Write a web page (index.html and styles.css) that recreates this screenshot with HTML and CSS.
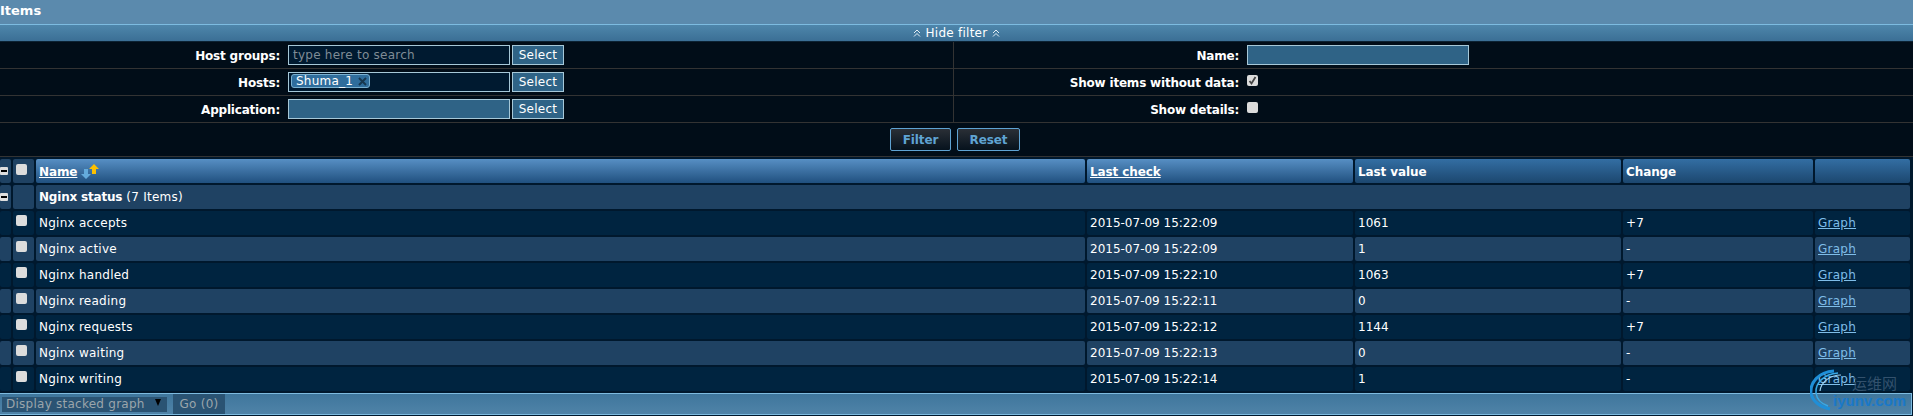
FILE: index.html
```html
<!DOCTYPE html>
<html lang="en">
<head>
  <meta charset="UTF-8" />
  <title>Items</title>
  <link rel="stylesheet" href="styles.css">
</head>
<body>
  <div class="title-bar">Items</div>

  <div class="filter-toggle">
    <svg class="chevrons" width="8" height="8" viewBox="0 0 8 8"><path d="M1 4 L4 1 L7 4 M1 7.5 L4 4.5 L7 7.5"/></svg>
    <span>Hide filter</span>
    <svg class="chevrons" width="8" height="8" viewBox="0 0 8 8"><path d="M1 4 L4 1 L7 4 M1 7.5 L4 4.5 L7 7.5"/></svg>
  </div>

  <div class="filter">
    <div class="filter-row">
      <div class="filter-half left">
        <label>Host groups:</label>
        <div class="field">
          <div class="input dark placeholder">type here to search</div>
          <button class="btn-select">Select</button>
        </div>
      </div>
      <div class="filter-half right">
        <label>Name:</label>
        <div class="field"><div class="input"></div></div>
      </div>
    </div>
    <div class="filter-row">
      <div class="filter-half left">
        <label>Hosts:</label>
        <div class="field">
          <div class="input dark">
            <span class="chip">Shuma_1<svg width="9" height="9" viewBox="0 0 9 9"><path d="M1 1 L8 8 M8 1 L1 8"/></svg></span>
          </div>
          <button class="btn-select">Select</button>
        </div>
      </div>
      <div class="filter-half right">
        <label>Show items without data:</label>
        <div class="field"><span class="check on"><svg width="11" height="11" viewBox="0 0 11 11"><path d="M2.5 6 L4.5 8.5 L8.5 2"/></svg></span></div>
      </div>
    </div>
    <div class="filter-row">
      <div class="filter-half left">
        <label>Application:</label>
        <div class="field">
          <div class="input"></div>
          <button class="btn-select">Select</button>
        </div>
      </div>
      <div class="filter-half right">
        <label>Show details:</label>
        <div class="field"><span class="check"></span></div>
      </div>
    </div>
    <div class="filter-actions">
      <button class="btn-action">Filter</button>
      <button class="btn-action">Reset</button>
    </div>
  </div>

  <table class="items">
    <colgroup>
      <col class="c-toggle"><col class="c-check"><col class="c-name"><col class="c-check-time"><col class="c-value"><col class="c-change"><col class="c-graph">
    </colgroup>
    <thead>
      <tr>
        <th class="toggle"><span class="minus"></span></th>
        <th class="cell-check"><span class="check"></span></th>
        <th class="sorted">
          <a href="#">Name</a>
          <svg class="sort" width="19" height="15" viewBox="0 0 19 15">
            <path class="down" d="M3 5 H7 V10 H10 L5 15 L0 10 H3 Z"/>
            <path class="up" d="M11 5 H15 V10 H11 Z M13 0 L18 5 H8 Z"/>
          </svg>
        </th>
        <th class="sorted"><a href="#">Last check</a></th>
        <th>Last value</th>
        <th>Change</th>
        <th></th>
      </tr>
    </thead>
    <tbody>
      <tr class="group">
        <td class="toggle"><span class="minus"></span></td>
        <td></td>
        <td colspan="5"><b>Nginx status</b> (7 Items)</td>
      </tr>
      <tr>
        <td></td><td class="cell-check"><span class="check"></span></td>
        <td>Nginx accepts</td><td>2015-07-09 15:22:09</td><td>1061</td><td>+7</td><td><a href="#">Graph</a></td>
      </tr>
      <tr class="alt">
        <td></td><td class="cell-check"><span class="check"></span></td>
        <td>Nginx active</td><td>2015-07-09 15:22:09</td><td>1</td><td>-</td><td><a href="#">Graph</a></td>
      </tr>
      <tr>
        <td></td><td class="cell-check"><span class="check"></span></td>
        <td>Nginx handled</td><td>2015-07-09 15:22:10</td><td>1063</td><td>+7</td><td><a href="#">Graph</a></td>
      </tr>
      <tr class="alt">
        <td></td><td class="cell-check"><span class="check"></span></td>
        <td>Nginx reading</td><td>2015-07-09 15:22:11</td><td>0</td><td>-</td><td><a href="#">Graph</a></td>
      </tr>
      <tr>
        <td></td><td class="cell-check"><span class="check"></span></td>
        <td>Nginx requests</td><td>2015-07-09 15:22:12</td><td>1144</td><td>+7</td><td><a href="#">Graph</a></td>
      </tr>
      <tr class="alt">
        <td></td><td class="cell-check"><span class="check"></span></td>
        <td>Nginx waiting</td><td>2015-07-09 15:22:13</td><td>0</td><td>-</td><td><a href="#">Graph</a></td>
      </tr>
      <tr>
        <td></td><td class="cell-check"><span class="check"></span></td>
        <td>Nginx writing</td><td>2015-07-09 15:22:14</td><td>1</td><td>-</td><td><a href="#">Graph</a></td>
      </tr>
    </tbody>
  </table>

  <div class="table-footer">
    <div class="action-select">Display stacked graph<span class="caret"></span></div>
    <button class="btn-go">Go (0)</button>
  </div>

  <!-- marca de agua -->
  <div class="watermark">
    <svg class="wm-swirl" width="40" height="42" viewBox="0 0 40 42">
      <path d="M24 2 C8 3 0 14 1 24 C2 32 10 38 20 40" stroke="#1f8fd8" stroke-width="3"/>
      <path d="M28 4 C14 5 5 14 6 24 C7 31 12 35 18 37" stroke="#38a9e6" stroke-width="1.5"/>
      <path d="M31 6 C20 6 11 13 10 22" stroke="#9fd4f2" stroke-width="1.2"/>
    </svg>
    <span class="wm-cn">运维网</span>
    <span class="wm-url">iyunv.com</span>
  </div>
</body>
</html>
```

FILE: styles.css
```css
* { margin: 0; padding: 0; box-sizing: border-box; }
html, body { height: 100%; overflow: hidden; }
body {
  position: relative;
  font-family: "DejaVu Sans", sans-serif;
  font-size: 12px;
  letter-spacing: 0.25px;
  color: #fff;
  background: #00182d;
}
button { font-family: inherit; font-size: 12px; letter-spacing: inherit; }

.title-bar {
  height: 25px;
  line-height: 22px;
  font-size: 13px;
  font-weight: bold;
  letter-spacing: 0;
  background: #5b8aad;
  border-bottom: 1px solid #7dbbe0;
}

.filter-toggle {
  height: 17px;
  display: flex;
  align-items: center;
  justify-content: center;
  gap: 5px;
  background: linear-gradient(#4e86ab, #3b6f95);
  border-bottom: 1px solid #0c2233;
}
.chevrons path { fill: none; stroke: #e4eef5; stroke-width: 1; }

.filter { background: #010d18; }
.filter-row {
  height: 27px;
  display: grid;
  grid-template-columns: 954px 1fr;
  border-bottom: 1px solid #333;
}
.filter-half {
  display: grid;
  column-gap: 8px;
  align-items: center;
}
.filter-half.left { grid-template-columns: 280px 1fr; border-right: 1px solid #333; }
.filter-half.right { grid-template-columns: 285px 1fr; }
.filter-half label {
  padding-top: 1px;
  text-align: right;
  font-weight: bold;
  letter-spacing: -0.2px;
}
.field { display: flex; gap: 2px; align-items: center; }

.input {
  width: 222px;
  height: 20px;
  line-height: 18px;
  padding: 0 4px;
  background: #2f6386;
  border: 1px solid #a6c8d8;
}
.input.dark { background: #001a30; }
.input.placeholder { color: #7f8c96; }
.input .chip {
  display: inline-flex;
  align-items: center;
  gap: 5px;
  height: 14px;
  margin: 1px 0 0 -2px;
  padding: 0 2px 0 4px;
  line-height: 14px;
  color: #fff;
  background: #2f6d9c;
  border: 1px solid #7ab0d0;
  border-radius: 3px;
  vertical-align: top;
}
.chip svg path { stroke: #17374f; stroke-width: 2; fill: none; }

.btn-select {
  width: 52px;
  height: 20px;
  color: #fff;
  background: #2f6386;
  border: 1px solid #a6c8d8;
}

.check {
  display: inline-block;
  width: 11px;
  height: 11px;
  background: #dcdcdc;
  border-radius: 2px;
  vertical-align: top;
}
.check svg { display: block; }
.check path { fill: none; stroke: #444; stroke-width: 1.8; }
.filter-half .check { margin-top: -4px; }

.filter-actions {
  height: 34px;
  display: flex;
  justify-content: center;
  align-items: center;
  gap: 6px;
  padding-right: 3px;
  border-bottom: 1px solid #333;
}
.btn-action {
  height: 23px;
  font-weight: bold;
  letter-spacing: -0.1px;
  color: #5fa3d3;
  background: linear-gradient(#2a2f36, #06121d);
  border: 1px solid #5fa3d3;
  border-radius: 2px;
}
.btn-action:first-child { width: 61px; }
.btn-action:last-child { width: 63px; }

.items {
  width: 1914px;
  margin-left: -2px;
  table-layout: fixed;
  border-collapse: separate;
  border-spacing: 2px;
}
.c-toggle { width: 11px; }
.c-check { width: 21px; }
.c-name { width: 1049px; }
.c-check-time { width: 266px; }
.c-value { width: 266px; }
.c-change { width: 190px; }
.c-graph { width: 95px; }

.items th,
.items td {
  height: 24px;
  padding: 0 3px;
  text-align: left;
  white-space: nowrap;
  border-radius: 2px;
  background: #002440;
}
.items tbody td:nth-child(4),
.items tbody td:nth-child(5) { letter-spacing: 0; }
.items tr.alt td, .items tr.group td { background: #1f4263; }
.items th {
  padding-top: 1px;
  font-weight: bold;
  letter-spacing: -0.1px;
  background: linear-gradient(#336ea3, #1c476f);
}
.items th.sorted { background: linear-gradient(#578fc4, #20507f); }
.items th a { color: #fff; }
.items th.toggle, .items th.cell-check { background: #1f4263; }
.items td a { color: #7fbde8; }
.items td b { font-weight: bold; letter-spacing: -0.2px; }

.items .toggle { padding: 0; vertical-align: top; }
.minus {
  display: block;
  width: 8px;
  height: 8px;
  margin-top: 8px;
  background: linear-gradient(#000, #000) center / 6px 2px no-repeat, #dedede;
  border-radius: 1px;
}
.items .cell-check { padding: 4px 0 0 3px; vertical-align: top; }
.items th.cell-check { padding-top: 5px; }

.sort { vertical-align: top; margin: -1px 0 0 0; }
.sort .down { fill: #64abdc; }
.sort .up { fill: #fdc000; }

.table-footer {
  width: 1912px;
  height: 22px;
  display: flex;
  align-items: center;
  gap: 6px;
  padding-left: 2px;
  background: linear-gradient(#3f769c, #4f83a8);
  border: 1px solid #7dbbe0;
  border-left: 0;
}
.action-select {
  width: 165px;
  height: 15px;
  line-height: 15px;
  padding-left: 4px;
  overflow: hidden;
  position: relative;
  color: #9aa5ab;
  background: #2a5373;
}
.caret {
  position: absolute;
  top: 2px;
  right: 6px;
  border-left: 3px solid transparent;
  border-right: 3px solid transparent;
  border-top: 7px solid #000;
}
.btn-go {
  width: 52px;
  height: 20px;
  color: #9aa5ab;
  background: #2a5373;
  border: 0;
}

.watermark {
  position: absolute;
  left: 1810px;
  top: 368px;
  width: 103px;
  height: 48px;
  letter-spacing: 0;
  pointer-events: none;
}
.wm-swirl { position: absolute; left: 0; top: 1px; }
.wm-swirl path { fill: none; }
.wm-cn {
  position: absolute;
  left: 42px;
  top: 5px;
  font-family: "Noto Sans CJK SC", sans-serif;
  font-size: 15px;
  line-height: 20px;
  color: #33516d;
}
.wm-url {
  position: absolute;
  left: 23px;
  top: 23px;
  font-family: "Liberation Sans", sans-serif;
  font-size: 15px;
  line-height: 20px;
  font-weight: bold;
  color: #1a78c8;
}
```
